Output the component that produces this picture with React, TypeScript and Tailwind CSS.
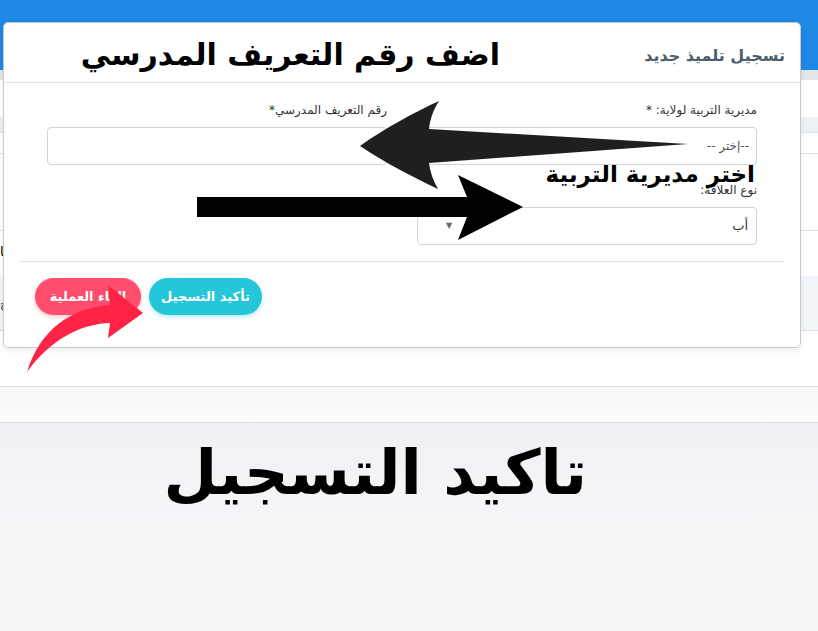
import React from 'react';

const font = { fontFamily: '"DejaVu Sans", "Noto Sans", sans-serif' };

function BackgroundPage() {
  return (
    <div className="flex h-full flex-col">
      <div className="h-[70px] bg-[#1e88e5]" />
      <div className="h-[10px] bg-[#e3e6ea]" />
      <div className="h-[37px] bg-white" />
      <div className="h-[16px] border-b border-[#dde1e5] bg-[#eef1f4]" />
      <div className="h-[21px] border-b border-[#dde1e5] bg-white" />
      <div className="h-[77px] border-b border-[#dde1e5] bg-white" />
      <div className="h-[45px] bg-white">
        <div className="mt-[14px] text-[13px] leading-none text-black">ـا</div>
      </div>
      <div className="h-[55px] border-b border-[#dde1e5] bg-[#f1f4f8]">
        <div className="mt-[22px] text-[12px] leading-none text-[#333]">ـج</div>
      </div>
      <div className="h-[56px] border-b border-[#dde1e5] bg-white" />
      <div className="h-[36px] border-b border-[#d9dde2] bg-gradient-to-b from-[#f7f7f8] to-[#fdfdfd]" />
      <div className="flex-1 bg-gradient-to-b from-[#eef0f3] via-[#f6f7f9] to-[#f6f7f9]" />
    </div>
  );
}

function Field({ label, children }: { label: string; children: React.ReactNode }) {
  return (
    <div className="flex flex-col gap-[9px]">
      <label className="text-[12px] leading-[16px] text-[#333]">{label}</label>
      {children}
    </div>
  );
}

function Modal() {
  return (
    <div
      dir="rtl"
      className="absolute left-[3px] top-[22px] flex h-[326px] w-[798px] flex-col rounded-[5px] border border-[#c6cad0] bg-white shadow-[0_2px_6px_rgba(0,0,0,0.08)]"
      style={font}
    >
      {/* Header */}
      <div className="flex h-[60px] items-center border-b border-[#dee2e6] px-[15px] pt-[6px]">
        <h5 className="text-[16px] font-bold text-[#4b5d6b]">تسجيل تلميذ جديد</h5>
      </div>

      {/* Body */}
      <div className="flex flex-col gap-[17px] px-[43px] pt-[19px]">
        <div className="grid grid-cols-2 gap-[30px]">
          <Field label="مديرية التربية لولاية: *">
            <div className="flex h-[38px] items-center rounded-[4px] border border-[#ced4da] px-[7px] text-[12px] text-[#555]">
              --إختر --
            </div>
          </Field>
          <Field label="رقم التعريف المدرسي*">
            <div className="h-[38px] rounded-[4px] border border-[#ced4da]" />
          </Field>
        </div>
        <div className="grid grid-cols-2 gap-[30px]">
          <Field label="نوع العلاقة:">
            <div className="flex h-[38px] items-center justify-between rounded-[4px] border border-[#ced4da] pl-[28px] pr-[8px] text-[13px] text-[#333]">
              <span>أب</span>
              <span className="text-[8px] text-[#666]">▼</span>
            </div>
          </Field>
          <div />
        </div>
      </div>

      {/* Footer */}
      <div className="mx-[16px] mt-[16px] flex justify-end gap-[8px] border-t border-[#dee2e6] pl-[15px] pt-[16px]">
        <button className="h-[37px] w-[113px] rounded-full bg-[#26c6da] text-[13px] font-bold text-white shadow-[0_2px_4px_rgba(38,198,218,0.35)]">
          تأكيد التسجيل
        </button>
        <button className="h-[37px] w-[106px] rounded-full bg-[#ff4d6d] text-[13px] font-bold text-white shadow-[0_2px_4px_rgba(255,77,109,0.35)]">
          إلغاء العملية
        </button>
      </div>
    </div>
  );
}

function Arrows() {
  return (
    <svg className="pointer-events-none absolute left-0 top-0" width="818" height="631" viewBox="0 0 818 631">
      {/* left-pointing tapered arrow */}
      <path
        d="M360 146 C 385 128, 415 112, 439 101 C 433 110, 430 120, 429 129 L 688 144 L 429 163 C 430 172, 433 180, 438 189 C 415 178, 385 163, 360 146 Z"
        fill="#1f1f1f"
      />
      {/* right-pointing arrow */}
      <path d="M197 197 L467 197 L458 175 L523 207 L458 240 L467 217 L197 217 Z" fill="#000" />
      {/* red curved arrow */}
      <path
        d="M27 372 C 40 330, 70 308, 110 305 L 108 285 L 143 313 L 108 338 L 110 323 C 80 324, 50 340, 27 372 Z"
        fill="#ff2445"
      />
    </svg>
  );
}

function Annotations() {
  return (
    <div dir="rtl" style={font} className="pointer-events-none">
      <div className="absolute right-[318px] top-[32px] whitespace-nowrap text-[30px] font-bold leading-[46px] text-black">
        اضف رقم التعريف المدرسي
      </div>
      <div className="absolute right-[63px] top-[157px] whitespace-nowrap text-[23px] font-bold leading-[34px] text-black">
        اختر مديرية التربية
      </div>
      <div className="absolute right-[231px] top-[428px] whitespace-nowrap text-[62px] font-bold leading-[90px] text-black">
        تاكيد التسجيل
      </div>
    </div>
  );
}

export default function App() {
  return (
    <div className="relative h-[631px] w-[818px] overflow-hidden bg-white" style={font}>
      <BackgroundPage />
      <Modal />
      <Arrows />
      <Annotations />
    </div>
  );
}
